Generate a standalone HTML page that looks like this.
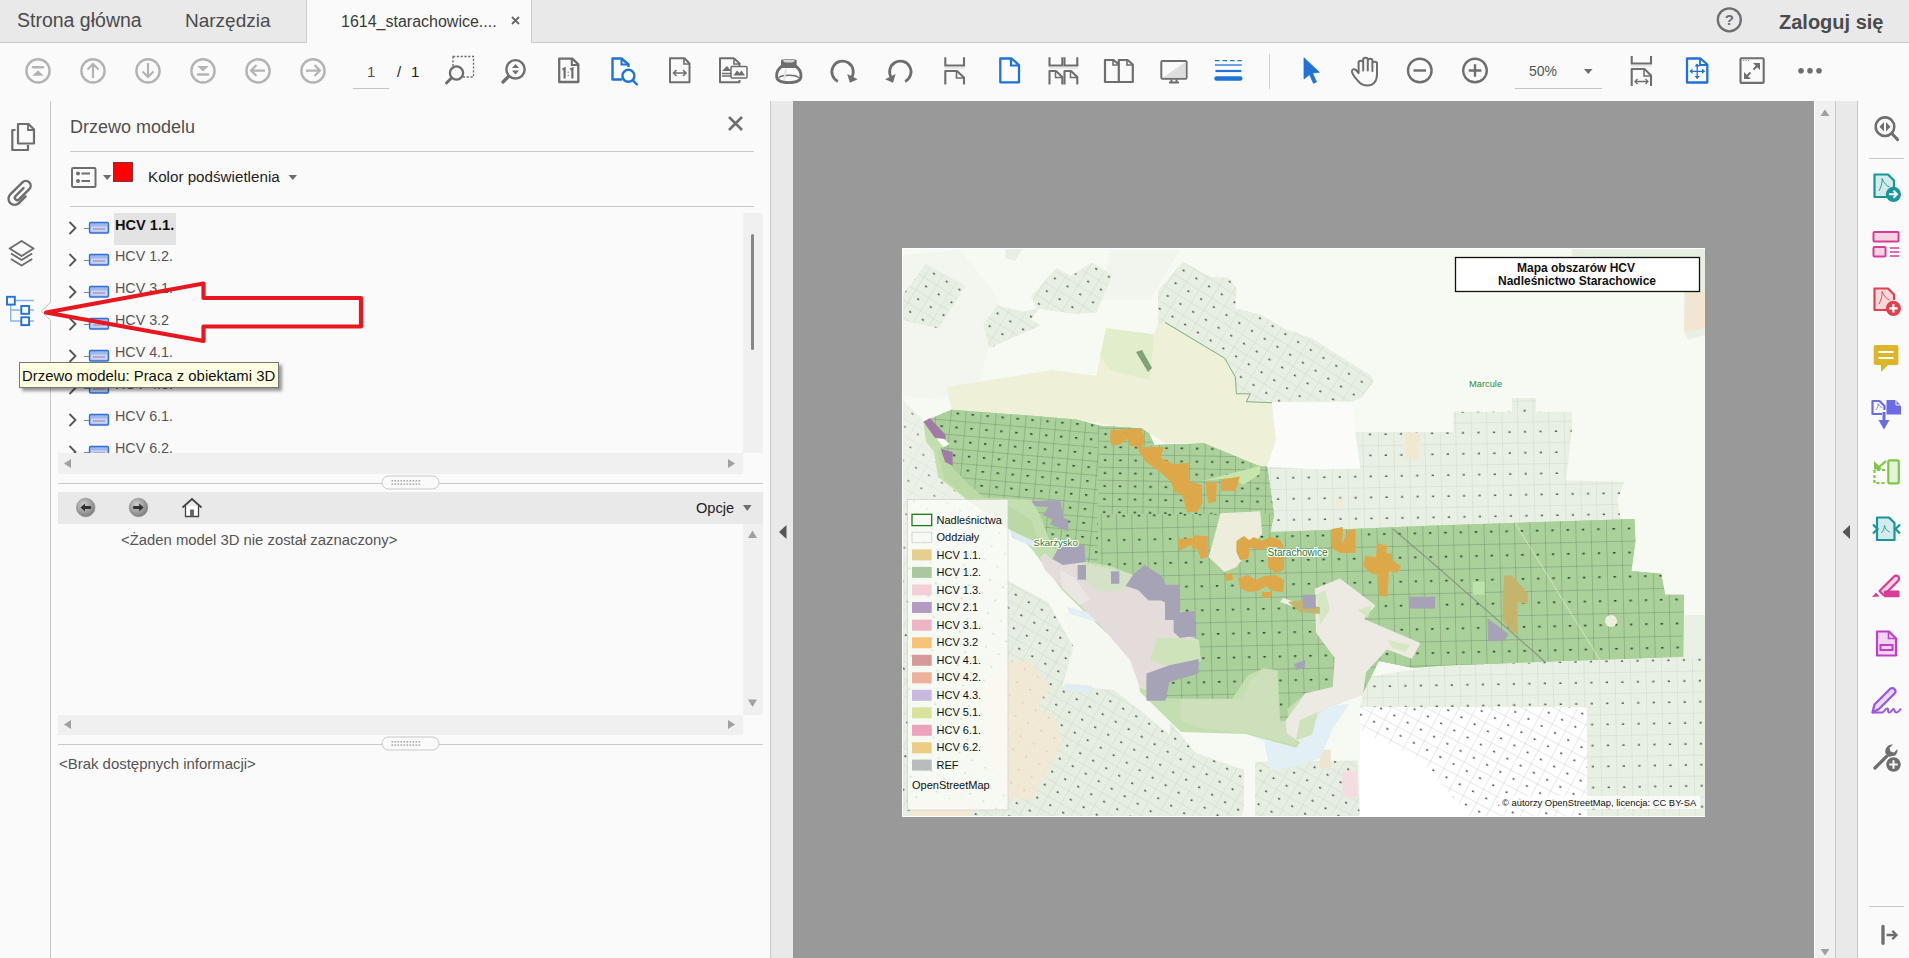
<!DOCTYPE html>
<html><head><meta charset="utf-8">
<style>
*{margin:0;padding:0;box-sizing:border-box}
html,body{width:1909px;height:958px;overflow:hidden;background:#fafafa;font-family:"Liberation Sans",sans-serif;color:#4b4b4b}
.a{position:absolute}
svg{position:absolute;overflow:visible}
.t{position:absolute;white-space:pre;line-height:1}
</style></head><body>
<!-- TAB BAR -->
<div class="a" style="left:0;top:0;width:1909px;height:43px;background:#e9e9e9;border-bottom:1px solid #c9c9c9"></div>
<div class="a" style="left:306px;top:0;width:226px;height:43px;background:#fafafa;border-left:1px solid #cdcdcd;border-right:1px solid #cdcdcd"></div>
<div class="t" style="left:17px;top:11px;font-size:19.5px">Strona główna</div>
<div class="t" style="left:185px;top:11px;font-size:19px">Narzędzia</div>
<div class="t" style="left:341px;top:13.5px;font-size:16px;color:#3a3a3a">1614_starachowice....</div>
<svg style="left:511px;top:16px" width="9" height="9"><path d="M1 1L8 8M8 1L1 8" stroke="#666" stroke-width="1.8"/></svg>
<svg style="left:1716px;top:7px" width="27" height="26"><circle cx="13.3" cy="12.8" r="11.5" fill="none" stroke="#6e6e6e" stroke-width="2.3"/><text x="13.3" y="18" font-size="15" font-weight="700" text-anchor="middle" fill="#6e6e6e" font-family="Liberation Sans">?</text></svg>
<div class="t" style="left:1779px;top:12px;font-size:20px;font-weight:700;color:#4b4b4b">Zaloguj się</div>

<!-- TOOLBAR -->
<!--TB--><svg style="left:0;top:0" width="1909" height="100"><circle cx="38" cy="70.9" r="11.6" fill="none" stroke="#b3b3b3" stroke-width="2.4"/><path d="M33 67.3h10" stroke="#b3b3b3" stroke-width="2.4" stroke-linecap="round"/><path d="M32.3 75.8L38 70.2L43.7 75.8Z" fill="#b3b3b3"/><circle cx="93" cy="70.9" r="11.6" fill="none" stroke="#b3b3b3" stroke-width="2.4"/><path d="M93 78V64M87.5 69.5L93 64L98.5 69.5" fill="none" stroke="#b3b3b3" stroke-width="2.2"/><circle cx="148" cy="70.9" r="11.6" fill="none" stroke="#b3b3b3" stroke-width="2.4"/><path d="M148 63V77M142.5 71.5L148 77L153.5 71.5" fill="none" stroke="#b3b3b3" stroke-width="2.2"/><circle cx="203" cy="70.9" r="11.6" fill="none" stroke="#b3b3b3" stroke-width="2.4"/><path d="M198 74.5h10" stroke="#b3b3b3" stroke-width="2.4" stroke-linecap="round"/><path d="M197.3 66L203 71.6L208.7 66Z" fill="#b3b3b3"/><circle cx="258" cy="70.9" r="11.6" fill="none" stroke="#b3b3b3" stroke-width="2.4"/><path d="M265 70.6H251M256.5 65L251 70.6L256.5 76" fill="none" stroke="#b3b3b3" stroke-width="2.2"/><circle cx="313" cy="70.9" r="11.6" fill="none" stroke="#b3b3b3" stroke-width="2.4"/><path d="M306 70.6H320M314.5 65L320 70.6L314.5 76" fill="none" stroke="#b3b3b3" stroke-width="2.2"/><path d="M353 88.5H389" stroke="#c4c4c4" stroke-width="1"/><rect x="453" y="56.5" width="20.5" height="20.5" fill="none" stroke="#6e6e6e" stroke-width="1.3" stroke-dasharray="2.2 1.6"/><circle cx="456.5" cy="73" r="6.6" fill="#fafafa" stroke="#6e6e6e" stroke-width="2.3"/><path d="M451.5 78L446.5 83" stroke="#6e6e6e" stroke-width="3" stroke-linecap="round"/><circle cx="515.5" cy="69.3" r="9.2" fill="none" stroke="#6e6e6e" stroke-width="2.4"/><path d="M508.5 76.5L503 82" stroke="#6e6e6e" stroke-width="3.2" stroke-linecap="round"/><path d="M512 68L515.5 64L519 68ZM512 70.5L515.5 74.5L519 70.5Z" fill="#6e6e6e"/><path d="M559.2 58.6H572.3L578.3 64.4V82H559.2Z" fill="none" stroke="#6e6e6e" stroke-width="2.3" stroke-linejoin="round"/><path d="M571.8 58.8V65H578.2" fill="none" stroke="#6e6e6e" stroke-width="2"/><path d="M562.5 69.5L564.6 68.5V78.5M570.3 69.5L572.4 68.5V78.5" fill="none" stroke="#6e6e6e" stroke-width="2.2"/><rect x="567.6" y="71.6" width="1.2" height="1.2" fill="#6e6e6e"/><rect x="567.6" y="74.8" width="1.2" height="1.2" fill="#6e6e6e"/><path d="M622 79.5H612.5V58.5H621.5L628.5 64.5V67" fill="none" stroke="#1f73d6" stroke-width="2.4" stroke-linejoin="round"/><path d="M621.5 58.5V64.5H628.5" fill="none" stroke="#1f73d6" stroke-width="2"/><circle cx="628.4" cy="75.8" r="6" fill="none" stroke="#1f73d6" stroke-width="2.4"/><path d="M632.8 80.3L637 84.5" stroke="#1f73d6" stroke-width="2.4" stroke-linecap="round"/><path d="M670 58.3H684.5L689.5 63.5V82.3H670Z" fill="none" stroke="#6e6e6e" stroke-width="2" stroke-linejoin="round"/><path d="M684 58.5V64H689.5" fill="none" stroke="#6e6e6e" stroke-width="1.6"/><path d="M673.5 73H686M676.5 70L673.5 73L676.5 76M683 70L686 73L683 76" fill="none" stroke="#6e6e6e" stroke-width="1.6"/><path d="M734 58.3H720V82.3H739.5V80" fill="none" stroke="#6e6e6e" stroke-width="2" stroke-linejoin="round"/><path d="M734 58.3L739.5 63.5V66" fill="none" stroke="#6e6e6e" stroke-width="2"/><path d="M734 58.5V64H739.5" fill="none" stroke="#6e6e6e" stroke-width="1.6"/><path d="M722 71L727 66L731 71Z" fill="#6e6e6e"/><path d="M722 73.5H731M722 76H731" stroke="#6e6e6e" stroke-width="1.3"/><rect x="731" y="66.5" width="16" height="11.5" rx="1" fill="#fafafa" stroke="#6e6e6e" stroke-width="1.5"/><path d="M733.5 75.5L737 70.5L739.5 73L741.5 70.5L745 75.5Z" fill="#6e6e6e"/><path d="M781.5 66.5C777.2 69.5 776.6 73 776.6 76C776.6 80.5 782 82.6 788.8 82.6C795.6 82.6 801 80.5 801 76C801 73 800.4 69.5 796.1 66.5Z" fill="#fafafa" stroke="#6e6e6e" stroke-width="2.8"/><path d="M779 77.5C782 74.5 795.6 74.5 798.6 77.5" fill="none" stroke="#6e6e6e" stroke-width="1.6"/><path d="M786 69L784 80" stroke="#e2e2e2" stroke-width="1.6"/><path d="M781 60.5C781 58.5 796.6 58.5 796.6 60.5V66.5C796.6 67.5 781 67.5 781 66.5Z" fill="#6e6e6e"/><ellipse cx="788.8" cy="61" rx="5.8" ry="1.6" fill="#d6d6d6"/><path d="M837.8 81.4A10.7 10.7 0 1 1 851.3 78" fill="none" stroke="#6e6e6e" stroke-width="2.8"/><path d="M847.2 74.1L857.7 79.3L849.9 82.7Z" fill="#6e6e6e"/><path d="M905.1 81.4A10.7 10.7 0 1 0 891.6 78" fill="none" stroke="#6e6e6e" stroke-width="2.8"/><path d="M895.7 74.1L885.2 79.3L893 82.7Z" fill="#6e6e6e"/><path d="M945.3 57.3V65.5H964V57.3" fill="none" stroke="#6e6e6e" stroke-width="2.1"/><path d="M945 68H964.5" stroke="#dcdcdc" stroke-width="1.2"/><path d="M945.3 84.5V71H957L964 77.5V84.5" fill="none" stroke="#6e6e6e" stroke-width="2.1" stroke-linejoin="round"/><path d="M956.5 71V78H964" fill="none" stroke="#6e6e6e" stroke-width="1.6"/><path d="M1000.3 58.5H1011.5L1019 65V82.3H1000.3Z" fill="none" stroke="#1f73d6" stroke-width="2.3" stroke-linejoin="round"/><path d="M1011 58.5V65.5H1019" fill="none" stroke="#1f73d6" stroke-width="2.2"/><path d="M1049.5 57.3V65.5H1062.3V57.3" fill="none" stroke="#6e6e6e" stroke-width="2.1"/><path d="M1049.5 84.5V71H1056.0L1062.3 77V84.5" fill="none" stroke="#6e6e6e" stroke-width="2.1" stroke-linejoin="round"/><path d="M1055.5 71V77.5H1062.3" fill="none" stroke="#6e6e6e" stroke-width="1.5"/><path d="M1064.5 57.3V65.5H1077.3V57.3" fill="none" stroke="#6e6e6e" stroke-width="2.1"/><path d="M1064.5 84.5V71H1071.0L1077.3 77V84.5" fill="none" stroke="#6e6e6e" stroke-width="2.1" stroke-linejoin="round"/><path d="M1070.5 71V77.5H1077.3" fill="none" stroke="#6e6e6e" stroke-width="1.5"/><path d="M1049 68H1078" stroke="#dcdcdc" stroke-width="1.2"/><path d="M1105 60H1113.5L1118.8 64.5V82H1105Z M1118.8 60H1127.5L1132.8 64.5V82H1118.8Z" fill="none" stroke="#6e6e6e" stroke-width="2.2" stroke-linejoin="round"/><path d="M1113 60V65H1118.8M1127 60V65H1132.8" fill="none" stroke="#6e6e6e" stroke-width="1.6"/><rect x="1161.3" y="60.9" width="25.3" height="17.9" rx="1.2" fill="#fafafa" stroke="#6e6e6e" stroke-width="2"/><path d="M1163 77.5L1185.5 62V77.5Z" fill="#dedede"/><path d="M1169 82.5H1179M1171.5 79.5V82M1176.5 79.5V82" stroke="#6e6e6e" stroke-width="2"/><path d="M1215 60.6h4.5M1222.5 60.6h4.5M1230 60.6h4.5M1237.5 60.6h4.3" stroke="#1f73d6" stroke-width="1.3"/><path d="M1215 65H1241.8" stroke="#1f73d6" stroke-width="1.3"/><path d="M1215.5 71H1241.3" stroke="#1f73d6" stroke-width="2.2"/><path d="M1216.5 78.5H1240.3" stroke="#1f73d6" stroke-width="4.4" stroke-linecap="round"/><path d="M1269.5 54V89" stroke="#d0d0d0" stroke-width="1"/><path d="M1304 57.8L1319.3 72.3L1312.5 73L1316.5 82L1313.5 83.3L1309.5 74.5L1304 79Z" fill="#1f73d6" stroke="#1f73d6" stroke-width="0.8" stroke-linejoin="round"/><path d="M1360 83C1356 79 1352.5 74 1352 72C1351.5 69.5 1354 68.3 1356 70L1358.6 73V62.5C1358.6 60 1363.2 60 1363.2 62.5V70.5V59.5C1363.2 57 1367.8 57 1367.8 59.5V70.5V60.5C1367.8 58 1372.4 58 1372.4 60.5V71V63.5C1372.4 61 1377 61 1377 63.5V74.5C1377 81.5 1373 85.5 1367.5 85.5C1364.5 85.5 1362 84.8 1360 83Z" fill="none" stroke="#6e6e6e" stroke-width="2" stroke-linejoin="round"/><circle cx="1419.8" cy="70.5" r="11.8" fill="none" stroke="#6e6e6e" stroke-width="2.4"/><path d="M1413.5 70.5H1426" stroke="#6e6e6e" stroke-width="2.4"/><circle cx="1475" cy="70.5" r="11.8" fill="none" stroke="#6e6e6e" stroke-width="2.4"/><path d="M1468.7 70.5H1481.3M1475 64.2V76.8" stroke="#6e6e6e" stroke-width="2.4"/><path d="M1515 88.5H1602" stroke="#c4c4c4" stroke-width="1"/><path d="M1584 69H1592.5L1588.25 74Z" fill="#6e6e6e"/><path d="M1631.7 56V63.5H1651V56" fill="none" stroke="#6e6e6e" stroke-width="2.1"/><path d="M1631 66H1651.5" stroke="#dcdcdc" stroke-width="1.2"/><path d="M1631.7 86V69H1644.5L1651 75.5V86" fill="none" stroke="#6e6e6e" stroke-width="2.1" stroke-linejoin="round"/><path d="M1644 69V76H1651" fill="none" stroke="#6e6e6e" stroke-width="1.5"/><path d="M1635 81.5H1648M1637.5 79L1635 81.5L1637.5 84M1645.5 79L1648 81.5L1645.5 84" fill="none" stroke="#6e6e6e" stroke-width="1.3"/><path d="M1687 58.5H1700.5L1707.3 64.5V82.5H1687Z" fill="none" stroke="#1f73d6" stroke-width="2.3" stroke-linejoin="round"/><path d="M1700 58.5V65H1707.3" fill="none" stroke="#1f73d6" stroke-width="1.8"/><path d="M1690 71.3H1704.5M1697.2 64V78.5" stroke="#1f73d6" stroke-width="1.3"/><path d="M1689.5 71.3L1692.5 68.5V74ZM1705 71.3L1702 68.5V74ZM1697.2 63.5L1694.4 66.5H1700ZM1697.2 79L1694.4 76H1700Z" fill="#1f73d6"/><rect x="1740.5" y="58.3" width="23.2" height="24.6" rx="1" fill="none" stroke="#6e6e6e" stroke-width="2.1"/><path d="M1743 60.5h1.2M1745.5 60.5h1.2M1748 60.5h1.2" stroke="#6e6e6e" stroke-width="0.8"/><path d="M1745 78L1750.5 72.5M1753.5 69.5L1759 64" stroke="#6e6e6e" stroke-width="2.1"/><path d="M1744 79V72L1751 79ZM1760 63V70L1753 63Z" fill="#6e6e6e"/><circle cx="1801" cy="70.8" r="2.8" fill="#6e6e6e"/><circle cx="1810" cy="70.8" r="2.8" fill="#6e6e6e"/><circle cx="1819" cy="70.8" r="2.8" fill="#6e6e6e"/></svg>
<div class="t" style="left:367px;top:64px;font-size:15px;color:#555">1</div>
<div class="t" style="left:397px;top:64px;font-size:15px;color:#222">/</div>
<div class="t" style="left:411px;top:64px;font-size:15px;color:#222">1</div>
<div class="t" style="left:1529px;top:64px;font-size:14px;color:#555">50%</div>
<!--/TB-->

<!-- LEFT RAIL -->
<div class="a" style="left:0;top:101px;width:51px;height:857px;background:#fafafa;border-right:1px solid #c9c9c9"></div>

<!-- PANEL -->
<div class="a" style="left:51px;top:101px;width:720px;height:857px;background:#fafafa;border-right:1px solid #c9c9c9"></div>
<div class="a" style="left:771px;top:101px;width:22px;height:857px;background:#e9e9e9"></div>

<!-- DOC AREA -->
<div class="a" style="left:793px;top:101px;width:1021px;height:857px;background:#999"></div>
<div class="a" style="left:1814px;top:101px;width:22px;height:857px;background:#f0f0f0;border-left:1px solid #fff;border-right:1px solid #c9c9c9"></div>
<div class="a" style="left:1836px;top:101px;width:22px;height:857px;background:#e9e9e9;border-right:1px solid #c9c9c9"></div>
<div class="a" style="left:1858px;top:101px;width:51px;height:857px;background:#fafafa"></div>

<!--PANEL--><svg style="left:0;top:101px" width="51" height="240" viewBox="0 101 51 240"><path d="M18 124H28.5L34 129.5V143.5H18Z" fill="none" stroke="#6e6e6e" stroke-width="2.2" stroke-linejoin="round"/><path d="M28 124V130H34" fill="none" stroke="#6e6e6e" stroke-width="1.8"/><path d="M15.5 130H12.3V150H28V145" fill="none" stroke="#6e6e6e" stroke-width="2.2" stroke-linejoin="round"/><path transform="translate(20.7 192.7) rotate(45) scale(0.86)" d="M-1.5 -6V7A2.8 2.8 0 0 0 4.1 7V-10A5.6 5.6 0 0 0 -7.1 -10V10A7.1 7.1 0 0 0 7.1 10V-1" fill="none" stroke="#6e6e6e" stroke-width="2.8" stroke-linecap="round"/><path d="M21.6 241L33.5 248.5L21.6 256L9.7 248.5Z" fill="none" stroke="#6e6e6e" stroke-width="2" stroke-linejoin="round"/><path d="M11 253.5L21.6 260L32.2 253.5M11 259L21.6 265.5L32.2 259" fill="none" stroke="#6e6e6e" stroke-width="2" stroke-linejoin="round"/><path d="M15.5 300.5H34M10.7 305V321H22M10.7 310H22M29 310H34M29 321H34" fill="none" stroke="#8ab4e6" stroke-width="1.4"/><rect x="7" y="296.8" width="7.8" height="7.8" fill="#fafafa" stroke="#1f73d6" stroke-width="1.9"/><rect x="21.3" y="306" width="7.8" height="7.8" fill="#fafafa" stroke="#1f73d6" stroke-width="1.9"/><rect x="21.3" y="317.3" width="7.8" height="7.8" fill="#fafafa" stroke="#1f73d6" stroke-width="1.9"/></svg>
<svg style="left:40px;top:301px" width="12" height="22"><path d="M10.8 1.2L1.2 10.4L10.8 19.3" fill="#fafafa" stroke="#bdbdbd" stroke-width="1"/><rect x="10.3" y="1.8" width="1.2" height="17" fill="#fafafa"/></svg>
<div class="t" style="left:70px;top:117.5px;font-size:18px;color:#505050">Drzewo modelu</div>
<svg style="left:726px;top:114px" width="19" height="19"><path d="M3 3L16 16M16 3L3 16" stroke="#6e6e6e" stroke-width="2.6"/></svg>
<div class="a" style="left:70px;top:151px;width:684px;height:1px;background:#c9c9c9"></div>
<div class="a" style="left:70px;top:206px;width:684px;height:1px;background:#c9c9c9"></div>
<svg style="left:60px;top:155px" width="250" height="40" viewBox="60 155 250 40"><rect x="72" y="168" width="23.5" height="19" rx="1.2" fill="none" stroke="#6e6e6e" stroke-width="2"/><circle cx="78" cy="173.5" r="2" fill="#6e6e6e"/><circle cx="78" cy="181" r="2" fill="#6e6e6e"/><path d="M81.5 173.5H90M81.5 181H90" stroke="#6e6e6e" stroke-width="1.8"/><path d="M103 175H111.5L107.25 180Z" fill="#6e6e6e"/><rect x="113.5" y="162.5" width="19" height="19" fill="#ff0000" stroke="#5a2a2a" stroke-width="0.8"/><path d="M288.5 175H297L292.75 180Z" fill="#6e6e6e"/></svg>
<div class="t" style="left:148px;top:169px;font-size:15.2px;color:#222">Kolor podświetlenia</div>
<div class="a" style="left:58px;top:213px;width:685px;height:240px;overflow:hidden"><div class="a" style="left:56px;top:0px;width:62px;height:32px;background:#e3e3e3"></div><svg style="left:0;top:0px" width="60" height="32" viewBox="0 0 60 32"><path d="M11.5 9L17.5 15L11.5 21" fill="none" stroke="#555" stroke-width="1.8"/><path d="M26 15.5H31" stroke="#888" stroke-width="1"/><rect x="31.5" y="9.5" width="19" height="10.5" rx="1" fill="#9bb8ee" stroke="#2f6fd8" stroke-width="1.3"/><rect x="33" y="13.5" width="16" height="5" fill="#c9d4f2"/><path d="M35 16h12" stroke="#b05a8a" stroke-width="0.8"/></svg><div class="t" style="left:57px;top:5px;font-size:14.6px;font-weight:700;color:#111">HCV 1.1.</div><svg style="left:0;top:32px" width="60" height="32" viewBox="0 0 60 32"><path d="M11.5 9L17.5 15L11.5 21" fill="none" stroke="#555" stroke-width="1.8"/><path d="M26 15.5H31" stroke="#888" stroke-width="1"/><rect x="31.5" y="9.5" width="19" height="10.5" rx="1" fill="#9bb8ee" stroke="#2f6fd8" stroke-width="1.3"/><rect x="33" y="13.5" width="16" height="5" fill="#c9d4f2"/><path d="M35 16h12" stroke="#b05a8a" stroke-width="0.8"/></svg><div class="t" style="left:57px;top:36px;font-size:14.3px;color:#555">HCV 1.2.</div><svg style="left:0;top:64px" width="60" height="32" viewBox="0 0 60 32"><path d="M11.5 9L17.5 15L11.5 21" fill="none" stroke="#555" stroke-width="1.8"/><path d="M26 15.5H31" stroke="#888" stroke-width="1"/><rect x="31.5" y="9.5" width="19" height="10.5" rx="1" fill="#9bb8ee" stroke="#2f6fd8" stroke-width="1.3"/><rect x="33" y="13.5" width="16" height="5" fill="#c9d4f2"/><path d="M35 16h12" stroke="#b05a8a" stroke-width="0.8"/></svg><div class="t" style="left:57px;top:68px;font-size:14.3px;color:#555">HCV 3.1.</div><svg style="left:0;top:96px" width="60" height="32" viewBox="0 0 60 32"><path d="M11.5 9L17.5 15L11.5 21" fill="none" stroke="#555" stroke-width="1.8"/><path d="M26 15.5H31" stroke="#888" stroke-width="1"/><rect x="31.5" y="9.5" width="19" height="10.5" rx="1" fill="#9bb8ee" stroke="#2f6fd8" stroke-width="1.3"/><rect x="33" y="13.5" width="16" height="5" fill="#c9d4f2"/><path d="M35 16h12" stroke="#b05a8a" stroke-width="0.8"/></svg><div class="t" style="left:57px;top:100px;font-size:14.3px;color:#555">HCV 3.2</div><svg style="left:0;top:128px" width="60" height="32" viewBox="0 0 60 32"><path d="M11.5 9L17.5 15L11.5 21" fill="none" stroke="#555" stroke-width="1.8"/><path d="M26 15.5H31" stroke="#888" stroke-width="1"/><rect x="31.5" y="9.5" width="19" height="10.5" rx="1" fill="#9bb8ee" stroke="#2f6fd8" stroke-width="1.3"/><rect x="33" y="13.5" width="16" height="5" fill="#c9d4f2"/><path d="M35 16h12" stroke="#b05a8a" stroke-width="0.8"/></svg><div class="t" style="left:57px;top:132px;font-size:14.3px;color:#555">HCV 4.1.</div><svg style="left:0;top:160px" width="60" height="32" viewBox="0 0 60 32"><path d="M11.5 9L17.5 15L11.5 21" fill="none" stroke="#555" stroke-width="1.8"/><path d="M26 15.5H31" stroke="#888" stroke-width="1"/><rect x="31.5" y="9.5" width="19" height="10.5" rx="1" fill="#9bb8ee" stroke="#2f6fd8" stroke-width="1.3"/><rect x="33" y="13.5" width="16" height="5" fill="#c9d4f2"/><path d="M35 16h12" stroke="#b05a8a" stroke-width="0.8"/></svg><div class="t" style="left:57px;top:164px;font-size:14.3px;color:#555">HCV 4.3.</div><svg style="left:0;top:192px" width="60" height="32" viewBox="0 0 60 32"><path d="M11.5 9L17.5 15L11.5 21" fill="none" stroke="#555" stroke-width="1.8"/><path d="M26 15.5H31" stroke="#888" stroke-width="1"/><rect x="31.5" y="9.5" width="19" height="10.5" rx="1" fill="#9bb8ee" stroke="#2f6fd8" stroke-width="1.3"/><rect x="33" y="13.5" width="16" height="5" fill="#c9d4f2"/><path d="M35 16h12" stroke="#b05a8a" stroke-width="0.8"/></svg><div class="t" style="left:57px;top:196px;font-size:14.3px;color:#555">HCV 6.1.</div><svg style="left:0;top:224px" width="60" height="32" viewBox="0 0 60 32"><path d="M11.5 9L17.5 15L11.5 21" fill="none" stroke="#555" stroke-width="1.8"/><path d="M26 15.5H31" stroke="#888" stroke-width="1"/><rect x="31.5" y="9.5" width="19" height="10.5" rx="1" fill="#9bb8ee" stroke="#2f6fd8" stroke-width="1.3"/><rect x="33" y="13.5" width="16" height="5" fill="#c9d4f2"/><path d="M35 16h12" stroke="#b05a8a" stroke-width="0.8"/></svg><div class="t" style="left:57px;top:228px;font-size:14.3px;color:#555">HCV 6.2.</div></div>
<div class="a" style="left:743px;top:213px;width:20px;height:240px;background:#f0f0f0"></div>
<div class="a" style="left:751px;top:234px;width:3px;height:116px;background:#868686;border-radius:2px"></div>
<div class="a" style="left:58px;top:453px;width:685px;height:21px;background:#f0f0f0"></div>
<svg style="left:58px;top:453px" width="685" height="21"><path d="M6 10.5L13 6V15Z" fill="#a0a0a0"/><path d="M677 10.5L670 6V15Z" fill="#a0a0a0"/></svg>
<div class="a" style="left:58px;top:483px;width:705px;height:1px;background:#c9c9c9"></div><svg style="left:381px;top:475px" width="60" height="16"><rect x="1" y="1" width="57" height="13" rx="6.5" fill="#fafafa" stroke="#c9c9c9" stroke-width="1"/><rect x="10.5" y="5" width="1.6" height="1.6" fill="#aaa"/><rect x="10.5" y="8.3" width="1.6" height="1.6" fill="#aaa"/><rect x="13.5" y="5" width="1.6" height="1.6" fill="#aaa"/><rect x="13.5" y="8.3" width="1.6" height="1.6" fill="#aaa"/><rect x="16.5" y="5" width="1.6" height="1.6" fill="#aaa"/><rect x="16.5" y="8.3" width="1.6" height="1.6" fill="#aaa"/><rect x="19.5" y="5" width="1.6" height="1.6" fill="#aaa"/><rect x="19.5" y="8.3" width="1.6" height="1.6" fill="#aaa"/><rect x="22.5" y="5" width="1.6" height="1.6" fill="#aaa"/><rect x="22.5" y="8.3" width="1.6" height="1.6" fill="#aaa"/><rect x="25.5" y="5" width="1.6" height="1.6" fill="#aaa"/><rect x="25.5" y="8.3" width="1.6" height="1.6" fill="#aaa"/><rect x="28.5" y="5" width="1.6" height="1.6" fill="#aaa"/><rect x="28.5" y="8.3" width="1.6" height="1.6" fill="#aaa"/><rect x="31.5" y="5" width="1.6" height="1.6" fill="#aaa"/><rect x="31.5" y="8.3" width="1.6" height="1.6" fill="#aaa"/><rect x="34.5" y="5" width="1.6" height="1.6" fill="#aaa"/><rect x="34.5" y="8.3" width="1.6" height="1.6" fill="#aaa"/><rect x="37.5" y="5" width="1.6" height="1.6" fill="#aaa"/><rect x="37.5" y="8.3" width="1.6" height="1.6" fill="#aaa"/></svg>
<div class="a" style="left:58px;top:492px;width:705px;height:32px;background:#e9e9e9"></div>
<svg style="left:70px;top:494px" width="140" height="28" viewBox="70 494 140 28"><defs><radialGradient id="rg" cx="0.4" cy="0.35" r="0.7"><stop offset="0" stop-color="#d0d0d0"/><stop offset="1" stop-color="#7a7a7a"/></radialGradient></defs><circle cx="85.7" cy="507.5" r="9.3" fill="url(#rg)" stroke="#888" stroke-width="0.6"/><path d="M80.5 507.5L85 503.5V506H91V509H85V511.5Z" fill="#333"/><circle cx="138.5" cy="507.5" r="9.3" fill="url(#rg)" stroke="#888" stroke-width="0.6"/><path d="M143.7 507.5L139.2 503.5V506H133.2V509H139.2V511.5Z" fill="#333"/><path d="M182.5 507.5L192 499L201.5 507.5" fill="none" stroke="#444" stroke-width="1.8"/><path d="M185.5 506V516.5H198.5V506" fill="#fff" stroke="#444" stroke-width="1.3"/><rect x="190" y="509.5" width="4" height="7" fill="#666"/></svg>
<div class="t" style="left:696px;top:501px;font-size:14.6px;color:#222">Opcje</div>
<svg style="left:740px;top:500px" width="16" height="16"><path d="M3 5H11.5L7.25 11Z" fill="#6e6e6e"/></svg>
<div class="t" style="left:121px;top:532.5px;font-size:14.85px;color:#555">&lt;Żaden model 3D nie został zaznaczony&gt;</div>
<div class="a" style="left:743px;top:524px;width:20px;height:191px;background:#f0f0f0"></div>
<svg style="left:743px;top:524px" width="20" height="191"><path d="M5 14L9.5 6.5L14 14Z" fill="#a0a0a0"/><path d="M5 175.5L9.5 183L14 175.5Z" fill="#a0a0a0"/></svg>
<div class="a" style="left:58px;top:715px;width:685px;height:20px;background:#f0f0f0"></div>
<svg style="left:58px;top:715px" width="685" height="20"><path d="M6 9.5L13 5V14Z" fill="#a0a0a0"/><path d="M677 9.5L670 5V14Z" fill="#a0a0a0"/></svg>
<div class="a" style="left:58px;top:744px;width:705px;height:1px;background:#c9c9c9"></div><svg style="left:381px;top:736px" width="60" height="16"><rect x="1" y="1" width="57" height="13" rx="6.5" fill="#fafafa" stroke="#c9c9c9" stroke-width="1"/><rect x="10.5" y="5" width="1.6" height="1.6" fill="#aaa"/><rect x="10.5" y="8.3" width="1.6" height="1.6" fill="#aaa"/><rect x="13.5" y="5" width="1.6" height="1.6" fill="#aaa"/><rect x="13.5" y="8.3" width="1.6" height="1.6" fill="#aaa"/><rect x="16.5" y="5" width="1.6" height="1.6" fill="#aaa"/><rect x="16.5" y="8.3" width="1.6" height="1.6" fill="#aaa"/><rect x="19.5" y="5" width="1.6" height="1.6" fill="#aaa"/><rect x="19.5" y="8.3" width="1.6" height="1.6" fill="#aaa"/><rect x="22.5" y="5" width="1.6" height="1.6" fill="#aaa"/><rect x="22.5" y="8.3" width="1.6" height="1.6" fill="#aaa"/><rect x="25.5" y="5" width="1.6" height="1.6" fill="#aaa"/><rect x="25.5" y="8.3" width="1.6" height="1.6" fill="#aaa"/><rect x="28.5" y="5" width="1.6" height="1.6" fill="#aaa"/><rect x="28.5" y="8.3" width="1.6" height="1.6" fill="#aaa"/><rect x="31.5" y="5" width="1.6" height="1.6" fill="#aaa"/><rect x="31.5" y="8.3" width="1.6" height="1.6" fill="#aaa"/><rect x="34.5" y="5" width="1.6" height="1.6" fill="#aaa"/><rect x="34.5" y="8.3" width="1.6" height="1.6" fill="#aaa"/><rect x="37.5" y="5" width="1.6" height="1.6" fill="#aaa"/><rect x="37.5" y="8.3" width="1.6" height="1.6" fill="#aaa"/></svg>
<div class="t" style="left:59px;top:757px;font-size:14.95px;color:#555">&lt;Brak dostępnych informacji&gt;</div>
<svg style="left:771px;top:520px" width="22" height="24"><path d="M8 12L15.5 5V19Z" fill="#555"/></svg>
<svg style="left:1836px;top:520px" width="22" height="24"><path d="M6.5 12L14 5V19Z" fill="#555"/></svg>
<svg style="left:1815px;top:101px" width="20" height="857"><path d="M5.5 15L10 8.5L14.5 15Z" fill="#a0a0a0"/><path d="M5.5 848L10 854.5L14.5 848Z" fill="#a0a0a0"/></svg><!--/PANEL-->
<!-- PAGE -->
<div class="a" style="left:902px;top:248px;width:803px;height:569px;background:#f8faf4;border:1px solid #fff"></div>
<!--MAP-->
<svg style="left:903px;top:249px" width="802" height="567" viewBox="903 249 802 567">
<defs>
<clipPath id="pg"><rect x="903" y="249" width="802" height="567"/></clipPath>
<pattern id="gE" width="15.3" height="24" patternUnits="userSpaceOnUse" patternTransform="translate(1438 545) rotate(-1.3)">
 <rect width="15.3" height="24" fill="#abd19b"/><path d="M0 0V24M0 0H15.3" stroke="#71896a" stroke-width="0.9"/><rect x="6.5" y="11" width="2.4" height="1.6" fill="#34432f"/></pattern>
<pattern id="gC" width="15.3" height="13" patternUnits="userSpaceOnUse" patternTransform="translate(1174 455) rotate(1)">
 <rect width="15.3" height="13" fill="#abd19b"/><path d="M0 0V13M0 0H15.3" stroke="#71896a" stroke-width="0.9"/><rect x="6.5" y="5.5" width="2.4" height="1.6" fill="#34432f"/></pattern>
<pattern id="gW" width="15" height="14" patternUnits="userSpaceOnUse" patternTransform="translate(950 420) rotate(5)">
 <rect width="15" height="14" fill="#abd19b"/><path d="M0 0V14M0 0H15" stroke="#71896a" stroke-width="0.9"/><rect x="6" y="6" width="2.4" height="1.6" fill="#34432f"/></pattern>
<pattern id="oA" width="15" height="15" patternUnits="userSpaceOnUse" patternTransform="rotate(32)">
 <rect width="15" height="15" fill="#e7efe2"/><path d="M0 0V15M0 0H15" stroke="#cbd3c7" stroke-width="0.8"/><rect x="6" y="6.5" width="2.2" height="1.5" fill="#555"/></pattern>
<pattern id="oB" width="15" height="15" patternUnits="userSpaceOnUse" patternTransform="rotate(32)">
 <rect width="15" height="15" fill="#e7efe2"/><path d="M0 0V15M0 0H15" stroke="#cbd3c7" stroke-width="0.8"/><rect x="6" y="6.5" width="2.2" height="1.5" fill="#555"/></pattern>
<pattern id="oC" width="15.5" height="21" patternUnits="userSpaceOnUse" patternTransform="translate(1270 468) rotate(-1)">
 <rect width="15.5" height="21" fill="#e8f0e4"/><path d="M0 0V21M0 0H15.5" stroke="#cdd4c9" stroke-width="0.8"/><rect x="6.5" y="9.5" width="2.2" height="1.5" fill="#555"/></pattern>
<pattern id="oW" width="15" height="15" patternUnits="userSpaceOnUse" patternTransform="rotate(28)">
 <rect width="15" height="15" fill="#fff"/><path d="M0 0V15M0 0H15" stroke="#c9c9c9" stroke-width="0.8"/><rect x="6" y="6.5" width="2.2" height="1.5" fill="#555"/></pattern>
<pattern id="oS" width="15" height="15" patternUnits="userSpaceOnUse" patternTransform="rotate(30)">
 <rect width="15" height="15" fill="#e6eee1"/><path d="M0 0V15M0 0H15" stroke="#cbd3c7" stroke-width="0.8"/><rect x="6" y="6.5" width="2.2" height="1.5" fill="#555"/></pattern>
</defs>
<g clip-path="url(#pg)">
<rect x="903" y="249" width="802" height="567" fill="#f7f9f3"/>
<!-- faint osm greens top-left -->
<path d="M903 255L960 250L1000 300L980 380L940 400L903 395Z" fill="#f1f5ed" opacity="0.8"/>
<path d="M1110 250L1180 250L1150 300L1100 300Z" fill="#f1f5ed"/>
<!-- NW oddzialy -->
<path d="M925.8 263.8L965.5 285.7L938.7 328.3L903 320.4L903 294.6Z" fill="url(#oA)"/>
<path d="M1031 296.6L1056.7 267.8L1070.6 276.3L1091.5 262.5L1112.3 274.8L1096.4 312.5L1074.6 314L1036.9 308.5Z" fill="url(#oA)"/>
<path d="M983.3 324.4L997.2 305.5L1023 311.5L1038.9 308.5L1031 319.4L1040.9 325.4L989.3 348.2Z" fill="url(#oA)"/>
<path d="M1006 249L1022 249L1015 261L1005 258Z" fill="#e7efe2"/>
<!-- NE band oddzialy -->
<path d="M1158 290.6L1182.9 261.9L1210.6 276.7L1228.5 277.7L1236.4 287.7L1235.4 308.5L1260.2 314.4L1286 329.3L1311.8 338.3L1371.3 376L1373.3 381.9L1361.4 397.8L1351.5 401.7L1246.3 401.7L1250.3 393.8L1236.4 393.8L1235.4 377L1224.5 375L1165 322.4L1158 324Z" fill="url(#oB)"/>
<!-- top edge small cells + NE corner -->
<path d="M1572 249L1705 249L1705 262L1572 256Z" fill="#e7efe2"/>
<path d="M1684 258L1705 258L1705 335L1688 340L1684 330Z" fill="#e9efe2"/>
<path d="M1686 292L1705 290L1705 328L1684 332Z" fill="#f1e6d0"/>
<path d="M903 400L923 420L926 442L934 452L938 477L967 500L1007 520L1007 620L903 560Z" fill="url(#oS)" opacity="0.7"/>
<!-- pale yellow -->

<path d="M946.6 386.9L1052.8 370L1096.4 376L1106.3 328.3L1154 334.3L1158 324L1165 322.4L1224.5 358.1L1235.4 377L1236.4 393.8L1250.3 393.8L1246.3 401.7L1272 402.7L1276 440L1267.2 466.7L1258.3 465.7L1205.7 443.9L1165 442.9L1150 433.5L1110.3 425.6L1076.6 419.6L1029 415.6L951.6 409.7Z" fill="#eef0d7"/>
<path d="M1106.3 328.3L1154 334.3L1150 380L1110 370L1100 355Z" fill="#dcebc6" opacity="0.7"/>
<path d="M1136 352L1142 350L1152 368L1148 372Z" fill="#7fa27a"/>
<path d="M1165 322.4L1224.5 358.1L1235.4 377L1236.4 393.8L1250.3 393.8L1246.3 401.7L1272 402.7" fill="none" stroke="#3d8a3d" stroke-width="0.8" opacity="0.8"/>
<!-- white area -->
<path d="M1272 402.7L1351.5 401.7L1355.5 432L1360.4 468.7L1311.8 469.3L1267.2 466.7L1276 440Z" fill="#fbfcf9"/>
<!-- east oddzialy -->
<path d="M1267.2 466.7L1311.8 469.3L1360.4 468.7L1355.5 432L1453 432L1453 411.7L1512 411.7L1512 398L1536 398L1536 411.7L1571.9 411.7L1571.9 430L1566 480.6L1624.5 481.6L1617.5 499.4L1620.5 518.3L1634.4 518.9L1435 525.6L1270.2 532.2L1274.1 515.3Z" fill="url(#oC)"/>
<path d="M1406 433L1420 433L1418 460L1405 458Z" fill="#f2e8d2"/>
<path d="M1335 498L1345 498L1338 515Z" fill="#f2e8d2" opacity="0.6"/>
<!-- SW oddzialy -->
<path d="M903 560L960 575L1007.8 580.5L1047.9 602L1072.5 645.1L1128 691.4L1170 722L1195.7 753L1244 770L1244 807.6L1242 816L903 816Z" fill="url(#oS)"/>
<path d="M1007 660L1030.5 661L1049.8 685.6L1036.9 709.1L1054 715.6L1062.6 743.4L1049.8 764.8L1032.6 799L1007 799L990 760L980 700L1000 660Z" fill="#f2e8d3" opacity="0.85"/>
<path d="M912.8 799L974.9 799L970 816L912 816Z" fill="#f2e8d3"/>
<path d="M1062.6 612L1140 612L1170 640L1170 734.8L1133.2 704.9L1114 689.9L1062.6 685.6L1073.3 647.1Z" fill="#f5f7f1"/>
<path d="M1064.7 683.5L1092.6 686L1090 694L1066 690Z" fill="#dfedf2"/>
<!-- bottom middle oddzialy -->
<path d="M1255 762L1357.6 760.5L1359.7 816L1255 816Z" fill="url(#oS)"/>
<path d="M1342.6 771.2L1357.6 771.2L1357.6 796.9L1342.6 796.9Z" fill="#f2dde0"/>
<path d="M1320 749.8L1330.8 749.8L1330.8 768L1320 768Z" fill="#ebe6cf"/>
<!-- SE white & light -->
<path d="M1435 666.3L1683.2 656.7L1705 656L1705 816L1587 816L1587 707L1360 707L1366.1 677.1Z" fill="url(#oC)"/>
<path d="M1360 707L1587 707L1587 816L1360 816Z" fill="url(#oW)"/>
<path d="M1360 730L1420 760L1470 816L1360 816Z" fill="#fff"/>
<path d="M1683 615L1705 615L1705 658L1683 658Z" fill="#e9f0e5"/>
<!-- forest extent light green -->
<path d="M923.4 421.7L926 442L934 452L938 477L967 500L1010 527L1031 548L1062 590L1098 625L1136 660L1140 692L1181 732L1245.7 734L1296.2 748L1319.2 736L1328.4 704L1362.8 695L1300 600L1100 540L983 497Z" fill="#c4dfaf"/>
<path d="M983 497L1032 500L1068 531L1085 546L1052 560L1031 548L1010 527L967 500Z" fill="#c4dfaf"/>
<path d="M936.8 450L983.6 470L1000 500L1031 520L1040 545L1010 530L975 505L945 480Z" fill="#bcd9a5"/>
<!-- river/lakes -->
<path d="M1245.7 734L1270 741.3L1296.2 748L1320.1 712L1332.7 705.8L1349.4 703.7L1332.7 728.7L1320.1 758L1296 766L1270 770L1264 741Z" fill="#e2eff4"/>
<path d="M1010 530L1040 544L1036 548L1012 538Z" fill="#dcebf0"/>
<path d="M1067 607L1107 617L1104 624L1070 614Z" fill="#e2eef2"/>
<!-- green forest main -->
<path id="gf" d="M923.4 421.7L951.6 409.7L1029 415.6L1076.6 419.6L1100 425.7L1141.8 428.4L1149 433.6L1154.3 445L1204.4 443.5L1258.3 465.7L1267.2 466.7L1274.1 515.3L1270.2 532.2L1435 525.6L1634.4 518.9L1635.4 541.1L1631.4 570.9L1661.2 573.8L1665.2 594.7L1684 594.7L1683.2 656.7L1440 665.7L1413.4 668L1378.9 661L1362.8 693.2L1335.3 704.7L1305.4 693.2L1287 709.3L1289.3 720.8L1280.1 720.8L1277.8 670.3L1264 668L1248 674.9L1231.9 699L1146.9 698L1146.5 680L1169.4 669L1200.8 661L1198.7 640L1177.8 632L1182 613L1173.6 602L1144.4 579L1119.3 571L1083.8 563L1073.8 557L1052 547L1040 515L1032 500L983.6 497L965.5 481.6L952.6 466.7L940.7 448.8L950 443.9Z" fill="#abd19b"/>
<clipPath id="gfc"><use href="#gf"/></clipPath>
<g clip-path="url(#gfc)">
 <rect x="1100" y="420" width="600" height="300" fill="url(#gE)"/>
 <path d="M1095 415L1275 415L1275 514L1095 514Z" fill="url(#gC)"/>
 <path d="M903 400L1098 400L1098 720L903 720Z" fill="url(#gW)"/>
</g>
<!-- towns -->
<path d="M1045 553L1052.5 560L1083.8 563L1119.3 571L1144.4 579L1173.6 602L1182 613L1177.8 632L1198.7 640L1200.8 661L1169.4 669L1146.5 680L1146 690L1140 688L1130 660L1100 625L1070 595L1045 570L1040 558Z" fill="#e3dcdb"/>
<path d="M1082 561L1110 566L1134 575L1128 590L1100 592L1085 580Z" fill="#d2e4c0" opacity="0.75"/><path d="M1157 638L1179 638L1199 641L1200 661L1175 668L1150 660Z" fill="#cfe3bb"/><path d="M1060 570L1075 578L1090 600L1080 605L1062 588Z" fill="#ece8e6" opacity="0.8"/>
<path d="M1181 699L1243 699L1250 680L1264 669L1277 671L1280 722L1289 721L1296.2 745L1245.7 733L1200 728L1181 720Z" fill="#cde0bb"/>
<path d="M1314.9 588.8L1340 578.4L1375.5 605.5L1364 619.1L1420.4 643.1L1412 658.8L1387 649.4L1366.1 672.3L1362.9 695.3L1332.7 705.8L1320.1 712L1301.3 743.4L1286.7 732.9L1285.7 720.4L1305.5 693.2L1332.7 687L1334.7 657.7L1316 632.7Z" fill="#ede9e3"/><path d="M1316 595L1325 590L1330 610L1320 625Z" fill="#cfe6bb" opacity="0.8"/><path d="M1358 610L1372 605L1368 618Z" fill="#cfe6bb" opacity="0.8"/><path d="M1388 640L1410 645L1405 652L1392 648Z" fill="#cfe6bb" opacity="0.8"/><path d="M1300 720L1318 712L1312 735L1296 740Z" fill="#c5e0b0" opacity="0.8"/>
<path d="M1220.6 513.3L1260.2 511.3L1262.2 533.2L1236.4 566.9L1224.5 571.9L1208.7 557Z" fill="#eceedb"/>
<path d="M1202 481L1260 466L1260 474L1243 485L1230 478Z" fill="#c8e6ab"/>
<path d="M1472.7 581.8L1484.6 581.8L1484.6 594.7L1472.7 594.7Z" fill="#bde3a8"/>
<ellipse cx="1611" cy="621" rx="6" ry="6" fill="#eeeedd"/>
<path d="M1283 598L1301 604L1298 608L1280 602Z" fill="#eef0e6"/>
<!-- orange HCV 3.2 patches -->
<g fill="#dda849">
<path d="M1111 429.9L1141.2 428.4L1144.9 437.7L1141.8 447.1L1130.3 446.1L1128.2 438.8L1120.9 444L1111.5 446.1L1109.9 437.7Z"/>
<path d="M1137.6 447.1L1163.7 447.1L1160.5 457.6L1173 464L1188.7 462.8L1188.7 481L1202 485L1202.3 503.5L1197 512L1187 512L1182 494L1175 493L1171 482L1161 473L1146 462L1140 453Z"/>
<path d="M1206 482.6L1216.9 482.6L1215.9 501.4L1208.6 503.5L1206.5 493.1Z"/>
<path d="M1221.1 479.5L1239.9 476.4L1235.7 491L1221.1 491Z"/>
<path d="M1177.9 539.1L1192.8 538.1L1194.8 535.2L1207.7 536.2L1207.7 557L1200.7 559L1197.7 549L1192.8 549L1190.8 545.1L1178.9 551Z"/>
<path d="M1236.4 541L1244 536L1249 540L1254 537L1262 541L1270 537L1280 540L1284 547L1276 549L1270 546L1262 550L1250 548L1248.3 559L1240 560L1236.4 552Z"/>
<path d="M1268 556L1284 556L1284 570L1276 573L1268 568Z"/>
<path d="M1224.5 575L1232 573L1233 580L1226 581Z"/>
<path d="M1238 578L1248 575L1256 580L1264 576L1276 575L1284 580L1283 592L1272 591L1266 586L1258 591L1248 592L1240 588Z"/>
<path d="M1262 592L1272 592L1270 598L1262 598Z"/>
<path d="M1331.7 529L1343 527L1342 545L1348 530L1355.5 529L1355.5 553L1340 553L1331.7 548Z"/>
<path d="M1377.3 543L1387.2 546L1386 553L1392 554L1392 560L1401 566L1397 573L1389 571L1387.2 596.7L1379 596L1378 575L1370 573L1363.4 566L1365 556L1376 557Z"/>
</g>
<!-- olive HCV 1.1 -->
<g fill="#c5b46b">
<path d="M1288 602L1302 600L1312 606L1319.8 607L1319.8 614L1300 612Z"/>
<path d="M1504.3 575.5L1511.6 575.2L1527.7 593L1527.7 604L1517.4 601.8L1517.4 632.5L1513 633.2L1502.8 620.8L1502.8 594.5Z"/>
</g>
<!-- purple HCV2.1/REF patches -->
<g fill="#a6a3b6">
<path d="M1031.3 501.3L1060.2 500L1063.9 518.2L1068.3 519.5L1068.3 531.4L1049.5 523.9L1053.3 520.1L1042.6 515.1L1048.9 506.9L1035.1 506.3Z"/>
<path d="M1052.8 559L1058.7 547L1084.5 545.1L1085.5 561.9L1062.7 564.9Z"/>
<path d="M1077.6 565L1086 565L1086 579.7L1077.6 579.7Z"/>
<path d="M1111 571.3L1119.3 571.3L1119.3 583.8L1111 583.8Z"/>
<path d="M1125.6 585.9L1134 573.4L1144.4 565L1161.1 575.5L1173.6 600.5L1177.8 608.9L1161.1 600.5L1148.6 600.5L1138.1 590.1Z"/>
<path d="M1173.6 613.1L1194.5 611L1195.5 636L1179.9 638.1L1173.6 631.9Z"/>
<path d="M1146.5 673.6L1169.4 665.3L1198.7 659L1198.7 673.6L1169.4 682L1165.3 700.7L1146.5 700.7Z"/>
<path d="M1165 584.8L1180 584.8L1180 620L1165 620Z"/>
<path d="M1302.9 594.7L1315.8 594.7L1315.8 608.6L1302.9 608.6Z"/>
<path d="M1409 596.7L1435 596.7L1435 608.6L1409 608.6Z"/>
<path d="M1487.5 618.6L1508.7 634L1504.3 641.3L1488.2 641.3Z"/>
<path d="M1294 664L1305 660L1305 668L1296 670Z"/>
</g>
<g fill="#a27aa8">
<path d="M923.4 421.7L930 418L945.6 435L945.6 439L935 438Z"/>
<path d="M940.7 448.8L952.6 452L952.6 465.7L945 462Z"/>
</g>
<!-- diagonal railway -->
<path d="M1393 529L1435 565L1533.5 651.5L1545 662" fill="none" stroke="#80867c" stroke-width="1.1" opacity="0.75"/><path d="M1515 523L1600 660" stroke="#e8efe4" stroke-width="0.8" opacity="0.8"/>
<!-- labels -->
<text x="1469" y="387" font-size="9.3" fill="#2e8b3a" font-family="Liberation Sans">Marcule</text>
<text x="1033.5" y="546" font-size="9.6" fill="#2a7a30" font-family="Liberation Sans" stroke="#fff" stroke-width="2.2" paint-order="stroke">Skarżysko</text>
<text x="1267.5" y="556" font-size="10" fill="#2a7a30" font-family="Liberation Sans" stroke="#fff" stroke-width="2.2" paint-order="stroke">Starachowice</text>
<!-- title -->
<rect x="1455.5" y="257.5" width="244" height="34" fill="#fff" stroke="#111" stroke-width="1.3"/>
<text x="1576" y="271.8" font-size="12" font-weight="700" text-anchor="middle" fill="#111" font-family="Liberation Sans">Mapa obszarów HCV</text>
<text x="1577" y="285.4" font-size="12" font-weight="700" text-anchor="middle" fill="#111" font-family="Liberation Sans">Nadleśnictwo Starachowice</text>
<!-- attribution -->
<rect x="1499" y="796" width="201" height="13" fill="#fff" opacity="0.75"/>
<text x="1502" y="806" font-size="9.4" fill="#111" font-family="Liberation Sans">© autorzy OpenStreetMap, licencja: CC BY-SA</text>
<!-- legend -->
<rect x="907.5" y="499.5" width="100.5" height="310.5" fill="#fbfcf8" opacity="0.82" stroke="#cfcfcf" stroke-width="0.8"/>
<g font-family="Liberation Sans" font-size="11" fill="#111">
<rect x="912" y="514.3" width="19.7" height="11.3" fill="none" stroke="#1c7a1c" stroke-width="1.3"/><text x="936.5" y="524">Nadleśnictwa</text>
<rect x="912" y="532.2" width="19.7" height="10.5" fill="none" stroke="#cfcfcf" stroke-width="0.8"/><text x="936.5" y="541.2">Oddziały</text>
<rect x="912" y="549.4" width="19.7" height="11" fill="#e5cf8f"/><text x="936.5" y="558.7">HCV 1.1.</text>
<rect x="912" y="566.9" width="19.7" height="11" fill="#a9c8a0"/><text x="936.5" y="576.2">HCV 1.2.</text>
<rect x="912" y="584.4" width="19.7" height="11" fill="#f3d0d8"/><text x="936.5" y="593.7">HCV 1.3.</text>
<rect x="912" y="602" width="19.7" height="11" fill="#b39bc4"/><text x="936.5" y="611.2">HCV 2.1</text>
<rect x="912" y="619.7" width="19.7" height="11" fill="#efb4c3"/><text x="936.5" y="628.7">HCV 3.1.</text>
<rect x="912" y="637.3" width="19.7" height="11" fill="#f7c27a"/><text x="936.5" y="646.2">HCV 3.2</text>
<rect x="912" y="654.8" width="19.7" height="11" fill="#d69a9a"/><text x="936.5" y="663.7">HCV 4.1.</text>
<rect x="912" y="672.3" width="19.7" height="11" fill="#eeb19a"/><text x="936.5" y="681.2">HCV 4.2.</text>
<rect x="912" y="689.8" width="19.7" height="11" fill="#c9b9e0"/><text x="936.5" y="698.7">HCV 4.3.</text>
<rect x="912" y="707.3" width="19.7" height="11" fill="#d7e39a"/><text x="936.5" y="716.2">HCV 5.1.</text>
<rect x="912" y="724.8" width="19.7" height="11" fill="#eba2bc"/><text x="936.5" y="733.7">HCV 6.1.</text>
<rect x="912" y="742.3" width="19.7" height="11" fill="#ebcd85"/><text x="936.5" y="751.2">HCV 6.2.</text>
<rect x="912" y="759.6" width="19.7" height="11" fill="#b8bcbc"/><text x="936.5" y="768.7">REF</text>
<text x="912" y="789.3">OpenStreetMap</text>
</g>
</g>
</svg>
<!--/MAP-->
<!--OVER--><svg style="left:1858px;top:101px" width="51" height="857" viewBox="1858 101 51 857"><circle cx="1885" cy="126.7" r="9.3" fill="none" stroke="#6e6e6e" stroke-width="2.6"/><path d="M1891.8 133.5L1897.5 139.5" stroke="#6e6e6e" stroke-width="3.2" stroke-linecap="round"/><path d="M1884 122V131.5L1879.5 126.75Z M1886 122V131.5L1890.5 126.75Z" fill="#6e6e6e"/><path d="M1869 158.5H1904" stroke="#c9c9c9" stroke-width="1"/><path d="M1887 197H1874.5V174.5H1888L1894 180.5V187" fill="#d3ebeb" stroke="#17979a" stroke-width="2.2" stroke-linejoin="round"/><path d="M1879 191C1881 187 1882.5 183 1882 178.5C1884 183 1886 185.5 1889.5 187" fill="none" stroke="#17979a" stroke-width="0.9"/><circle cx="1893.4" cy="194.3" r="7.6" fill="#17979a"/><path d="M1889 194.3H1896M1893.5 190.8L1897 194.3L1893.5 197.8" fill="none" stroke="#fff" stroke-width="2"/><rect x="1873.5" y="232" width="25" height="9.5" rx="1" fill="#f4d3e6" stroke="#d83c96" stroke-width="2"/><rect x="1873.5" y="247" width="12" height="9.5" rx="1" fill="#f4d3e6" stroke="#d83c96" stroke-width="2"/><path d="M1890 248H1899M1890 252H1899M1890 256H1899" stroke="#d83c96" stroke-width="1.4"/><path d="M1887 310H1874.5V288.5H1888L1894 294.5V300" fill="#f8dadd" stroke="#e0404f" stroke-width="2.2" stroke-linejoin="round"/><path d="M1879 304C1881 300 1882.5 296 1882 291.5C1884 296 1886 298.5 1889.5 300" fill="none" stroke="#e0404f" stroke-width="0.9"/><circle cx="1893.4" cy="308.4" r="7.6" fill="#e0404f"/><path d="M1889.2 308.4H1897.6M1893.4 304.2V312.6" stroke="#fff" stroke-width="2.2"/><path d="M1876 345H1896.5C1897.6 345 1898.4 345.8 1898.4 347V363C1898.4 364.2 1897.6 365 1896.5 365H1888L1881 372V365H1876C1874.8 365 1873.7 364.2 1873.7 363V347C1873.7 345.8 1874.8 345 1876 345Z" fill="#dcb52a"/><path d="M1878.5 352H1893.5M1878.5 358H1893.5" stroke="#fff" stroke-width="1.8"/><path d="M1882 414H1872.5V401H1879.5L1884.5 406V410" fill="none" stroke="#6b6be6" stroke-width="2.2" stroke-linejoin="round"/><path d="M1886.5 400H1895.5L1901 405.5V414.5H1886.5Z" fill="#6b6be6"/><path d="M1896 400V405H1901" fill="none" stroke="#fafafa" stroke-width="1"/><path d="M1884 412V421" stroke="#6b6be6" stroke-width="3"/><path d="M1878.5 420H1889.5L1884 429.5Z" fill="#6b6be6"/><path d="M1876 410C1877.5 408 1878.5 406 1878 403.5C1879.5 406 1880.5 407 1882.5 408" fill="none" stroke="#6b6be6" stroke-width="0.8"/><rect x="1888.3" y="460.3" width="10.5" height="23" rx="1.5" fill="#e4f3d8" stroke="#7cc843" stroke-width="2.2"/><path d="M1874.5 470V483H1886" fill="none" stroke="#7cc843" stroke-width="2.2" stroke-dasharray="3 2"/><path d="M1877 470H1886" stroke="#7cc843" stroke-width="2.2" stroke-dasharray="3 2"/><path d="M1886 461L1879 467" stroke="#7cc843" stroke-width="2.2"/><path d="M1874 461V469.5H1882.5Z" fill="#7cc843"/><path d="M1877 517.5H1889L1894.5 523V540H1877Z" fill="#d3ebeb" stroke="#17979a" stroke-width="2.2" stroke-linejoin="round"/><path d="M1873 524.5L1877.5 529L1873 533.5M1900 524.5L1895.5 529L1900 533.5" fill="none" stroke="#17979a" stroke-width="2.2"/><path d="M1881.5 533C1883 531 1884.5 528.5 1884.5 525.5C1885 528.5 1887 531 1889.5 532" fill="none" stroke="#17979a" stroke-width="0.9"/><path d="M1879.5 591L1894 576.5C1895.2 575.3 1897 575.3 1898.2 576.5C1899.4 577.7 1899.4 579.5 1898.2 580.7L1883.7 595.2Z" fill="#f4d3e6" stroke="#d83c96" stroke-width="2.2" stroke-linejoin="round"/><path d="M1872 597L1876 592.5L1879.5 596.5Z" fill="#d83c96"/><rect x="1884" y="590.5" width="15.5" height="6.8" rx="1" fill="#d83c96"/><path d="M1877 631.5H1889L1896 638.5V655.5H1877Z" fill="#f1d5f2" stroke="#c040c8" stroke-width="2.2" stroke-linejoin="round"/><path d="M1888.5 631.5V638.5H1896" fill="none" stroke="#c040c8" stroke-width="1.6"/><rect x="1880.5" y="645" width="12" height="5" fill="none" stroke="#c040c8" stroke-width="2"/><path d="M1872.5 712.5L1874.5 704.5L1890 689C1891.3 687.7 1893.3 687.7 1894.5 689C1895.8 690.3 1895.8 692.2 1894.5 693.5L1879 709Z" fill="#e8dbf7" stroke="#9b59e0" stroke-width="2.3" stroke-linejoin="round"/><path d="M1872.5 712.5H1883M1883 712.5C1885 710 1886 708 1887.5 708.5C1889 709 1887 712.5 1889.5 712.5C1891.5 712.5 1892 709 1893.5 709C1895 709 1894 712.5 1896.5 712.5C1898.5 712.5 1900 710 1901 708.5" fill="none" stroke="#9b59e0" stroke-width="2"/><path d="M1875 768L1886.5 756.5" stroke="#6e6e6e" stroke-width="3.2" stroke-linecap="round"/><path d="M1885.5 753.5C1884.5 749 1887.5 744 1893 744.5L1889.5 748L1890.5 751.5L1894 752.5L1897.5 749C1898 754.5 1893.5 758 1889 757" fill="#6e6e6e"/><circle cx="1893.5" cy="764.5" r="8" fill="#6e6e6e" stroke="#fafafa" stroke-width="1.5"/><path d="M1889.3 764.5H1897.7M1893.5 760.3V768.7" stroke="#fafafa" stroke-width="2"/><path d="M1869 906.5H1904" stroke="#c9c9c9" stroke-width="1"/><path d="M1883 926.5V943.3" stroke="#6e6e6e" stroke-width="3.3" stroke-linecap="round"/><path d="M1886.5 935H1896M1892.3 930.8L1896.5 935L1892.3 939.2" fill="none" stroke="#6e6e6e" stroke-width="2.3"/></svg>
<div class="a" style="left:19px;top:362px;width:260px;height:26px;background:#ffffe1;border:1px solid #767676;box-shadow:3px 3px 3px rgba(0,0,0,0.4)"></div>
<div class="t" style="left:22px;top:369px;font-size:14.9px;color:#111">Drzewo modelu: Praca z obiektami 3D</div>
<svg style="left:0;top:0" width="400" height="400"><path d="M46 312.5L203.5 283.5V298H361V326.5H203.5V341Z" fill="none" stroke="#e8161e" stroke-width="4.2" stroke-linejoin="round"/></svg><!--/OVER-->
</body></html>
